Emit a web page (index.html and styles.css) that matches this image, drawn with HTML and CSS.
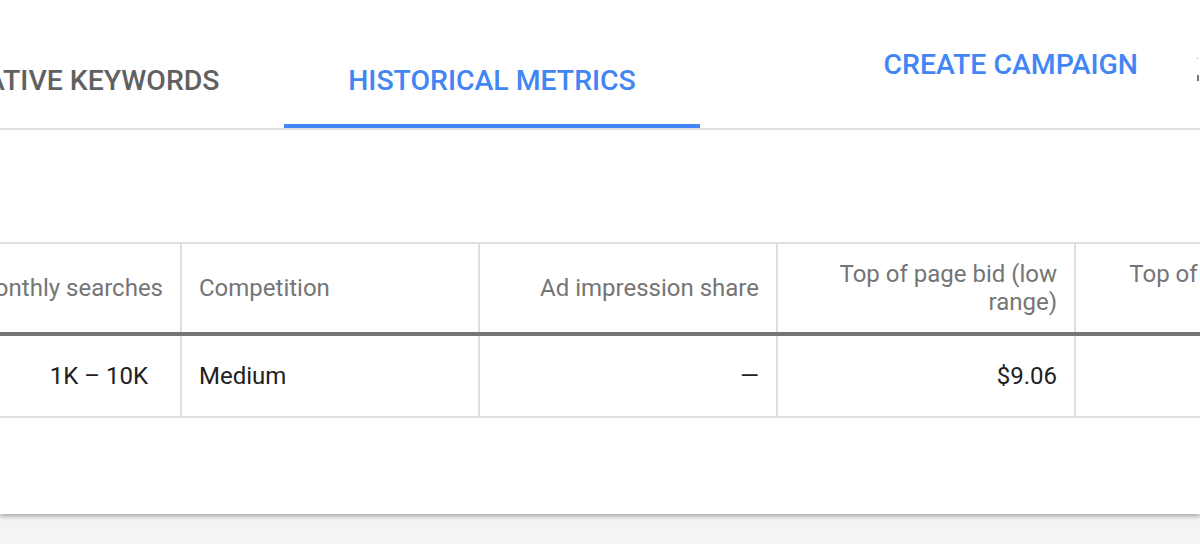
FILE: index.html
```html
<!DOCTYPE html>
<html lang="en">
<head>
<meta charset="utf-8">
<title>Keyword Planner - Historical metrics</title>
<link rel="stylesheet" href="styles.css">
</head>
<body>
<div class="card">
  <div class="header">
    <div class="tabs">
      <div class="tab tab-first">NEGATIVE KEYWORDS</div>
      <div class="tab tab-active">HISTORICAL METRICS</div>
    </div>
    <div class="actions">
      <div class="create-btn">CREATE CAMPAIGN</div>
      <svg class="more-icon" width="24" height="30" viewBox="0 0 24 30" aria-hidden="true">
        <rect x="1" y="17" width="2" height="6" fill="#757575"/>
        <rect x="1" y="0" width="1" height="1" fill="#9e9e9e"/>
      </svg>
    </div>
  </div>
  <div class="table">
    <div class="row head-row">
      <div class="cell num">Avg. monthly searches</div>
      <div class="cell">Competition</div>
      <div class="cell num">Ad impression share</div>
      <div class="cell num">Top of page bid (low range)</div>
      <div class="cell num">Top of page bid (high range)</div>
    </div>
    <div class="row body-row">
      <div class="cell num range">1K – 10K</div>
      <div class="cell">Medium</div>
      <div class="cell num">—</div>
      <div class="cell num">$9.06</div>
      <div class="cell num">$25.69</div>
    </div>
  </div>
</div>
</body>
</html>
```

FILE: styles.css
```css
html, body {
  margin: 0;
  padding: 0;
}
body {
  background: #f4f4f4;
  font-family: Roboto, "Liberation Sans", Arial, sans-serif;
  width: 1200px;
  height: 544px;
  overflow: hidden;
}
.card {
  background: #fff;
  height: 514px;
  box-shadow: 0 2px 5px rgba(0, 0, 0, 0.35);
  overflow: hidden;
  position: relative;
}
.header {
  display: flex;
  height: 128px;
  border-bottom: 2px solid #e0e0e0;
}
.tabs {
  display: flex;
  margin-left: -133px;
}
.tab {
  width: 416px;
  box-sizing: border-box;
  text-align: center;
  padding-top: 67px;
  height: 128px;
  line-height: 28px;
  font-size: 28.4px;
  font-weight: 500;
  color: #616161;
  border-bottom: 4px solid transparent;
  white-space: nowrap;
}
.tab-active {
  color: #4285f4;
  border-bottom-color: #4285f4;
  margin-left: 1px;
}
.actions {
  margin-left: auto;
  display: flex;
  align-items: flex-start;
  flex-shrink: 0;
  margin-right: -20px;
}
.create-btn {
  margin-top: 51px;
  line-height: 28px;
  font-size: 28.4px;
  font-weight: 500;
  color: #4285f4;
  white-space: nowrap;
}
.more-icon {
  margin-top: 58px;
  margin-left: 58px;
  flex-shrink: 0;
}
.table {
  margin-top: 112px;
  margin-left: -116px;
}
.row {
  display: grid;
  grid-template-columns: repeat(5, 298px);
}
.head-row {
  border-top: 2px solid #e0e0e0;
  border-bottom: 4px solid #757575;
}
.body-row {
  border-bottom: 2px solid #e0e0e0;
}
.cell {
  box-sizing: border-box;
  border-right: 2px solid #e0e0e0;
  padding: 0 17px;
  display: flex;
  align-items: center;
  font-size: 24px;
  line-height: 28px;
}
.head-row .cell {
  height: 88px;
  color: #757575;
}
.body-row .cell {
  height: 80px;
  color: #212121;
}
.cell.num {
  justify-content: flex-end;
  text-align: right;
}
.cell.range {
  padding-right: 32px;
}
```
